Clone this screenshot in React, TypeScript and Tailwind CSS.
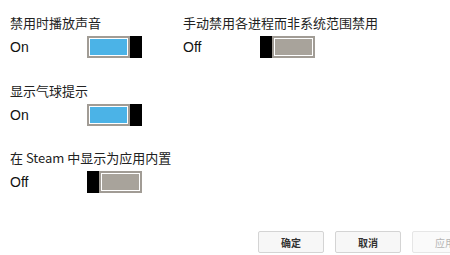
import React from 'react';

function Toggle({ on }: { on: boolean }) {
  const track = (
    <div className="flex-1 border-2 border-[#a19c95] bg-white p-[1px]">
      <div className={`h-full ${on ? 'bg-[#4bb3e7]' : 'bg-[#a8a39b]'}`} />
    </div>
  );
  const thumb = <div className="w-[12px] bg-black" />;
  return (
    <div className="flex w-[55px] h-[22px]">
      {on ? track : thumb}
      {on ? thumb : track}
    </div>
  );
}

function Setting({ label, on, className = '' }: { label: string; on: boolean; className?: string }) {
  return (
    <div className={`flex flex-col ${className}`}>
      <div className="h-[20px] leading-[20px] text-[13px] text-[#222] whitespace-nowrap">{label}</div>
      <div className="mt-[3px] flex items-center h-[22px]">
        <span className="w-[77px] text-[14px] text-[#111] font-['Liberation_Sans',sans-serif]">
          {on ? 'On' : 'Off'}
        </span>
        <Toggle on={on} />
      </div>
    </div>
  );
}

function Button({ label, disabled }: { label: string; disabled?: boolean }) {
  return (
    <button
      className={`w-[66px] h-[22px] shrink-0 rounded-[2px] border text-[10px] font-bold ${
        disabled
          ? 'border-[#e6e6e6] bg-[#fafafa] text-[#b5b5b5] font-normal'
          : 'border-[#d4d4d4] bg-[#f7f7f7] text-[#333]'
      }`}
    >
      {label}
    </button>
  );
}

export default function App() {
  return (
    <div className="w-[450px] h-[255px] overflow-hidden bg-white font-['Noto_Sans_CJK_SC',sans-serif]">
      <div className="pl-[10px] pt-[13px]">
        <div className="flex">
          <Setting className="w-[173px]" label="禁用时播放声音" on />
          <Setting label="手动禁用各进程而非系统范围禁用" on={false} />
        </div>
        <Setting className="mt-[23px]" label="显示气球提示" on />
        <Setting className="mt-[22px]" label="在 Steam 中显示为应用内置" on={false} />
      </div>
      <div className="mt-[38px] flex gap-[11px] pl-[258px]">
        <Button label="确定" />
        <Button label="取消" />
        <Button label="应用" disabled />
      </div>
    </div>
  );
}
